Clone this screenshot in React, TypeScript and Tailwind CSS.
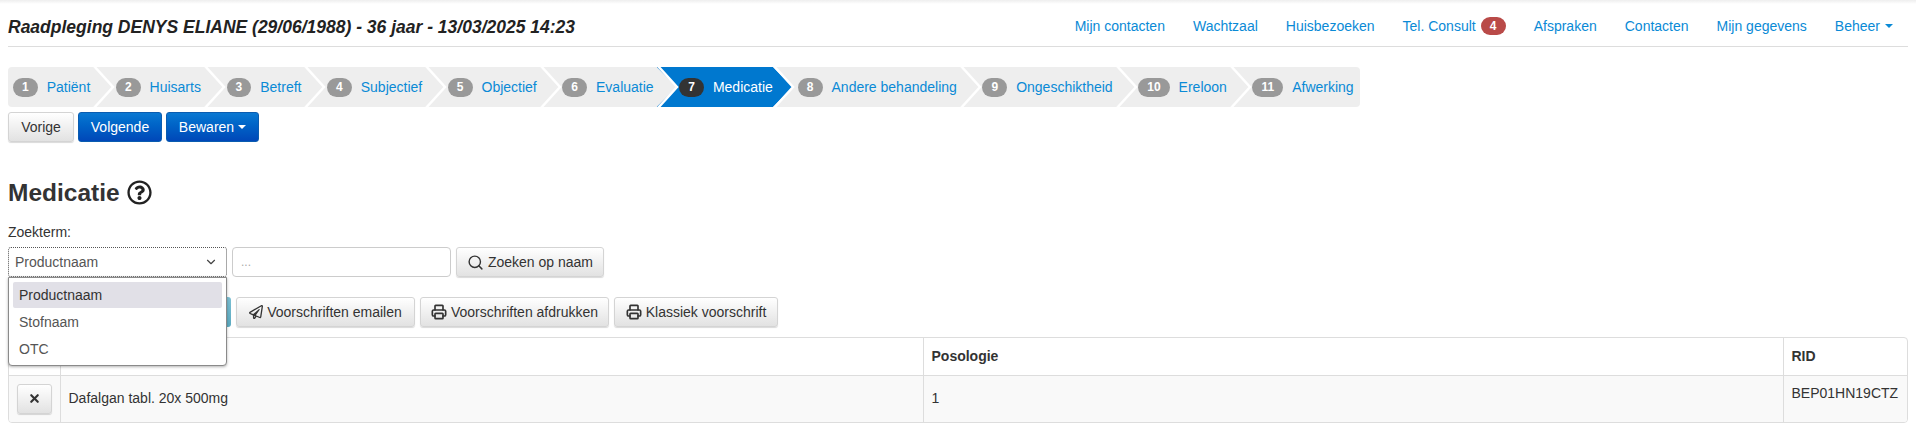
import { ChevronDown, Search, X } from 'lucide-react';
import { FaRegPaperPlane, FaRegQuestionCircle } from 'react-icons/fa';
import { LuPrinter } from 'react-icons/lu';

const NAV_LINKS = ['Mijn contacten', 'Wachtzaal', 'Huisbezoeken'];
const NAV_LINKS_2 = ['Afspraken', 'Contacten', 'Mijn gegevens'];

const STEPS = [
  'Patiënt',
  'Huisarts',
  'Betreft',
  'Subjectief',
  'Objectief',
  'Evaluatie',
  'Medicatie',
  'Andere behandeling',
  'Ongeschiktheid',
  'Ereloon',
  'Afwerking',
];

const PRINT_BUTTONS = [
  { label: 'Voorschriften afdrukken', width: 'w-[189px]' },
  { label: 'Klassiek voorschrift', width: 'w-[164px]' },
];

const btnDefault =
  'flex h-[30px] items-center justify-center rounded-[3px] border border-[#d4d4d4] bg-gradient-to-b from-white to-[#e2e2e2] text-[14px] text-[#333] shadow-[0_1px_1px_rgba(0,0,0,0.15)]';
const btnPrimary =
  'flex h-[30px] items-center justify-center rounded-[3px] border border-[#0a5cb0] bg-gradient-to-b from-[#0a78d2] to-[#0047b8] text-[14px] text-white';

function Step({ index, label }: { index: number; label: string }) {
  const active = index === 7;
  const last = index === STEPS.length;
  // the step after the active one sits a little further out
  const padLeft = index === 1 ? 'pl-[5px]' : index === 8 ? 'pl-[25px]' : 'pl-[22.6px]';

  return (
    <li className={`relative flex h-10 items-center ${padLeft} ${active ? 'pr-0' : 'pr-[3px]'}`}>
      {active && (
        <span className="absolute inset-y-0 left-0 -right-5 bg-[#0078cf] [clip-path:polygon(0_0,calc(100%-20px)_0,100%_50%,calc(100%-20px)_100%,0_100%,20px_50%)]" />
      )}
      <span
        className={`relative flex h-[19px] items-center justify-center rounded-full px-[9px] text-[12px] font-bold leading-none text-white ${
          active ? 'bg-[#333]' : 'bg-[#999]'
        }`}
      >
        {index}
      </span>
      <span className={`relative ml-[9px] whitespace-nowrap text-[14px] ${active ? 'text-white' : 'text-[#0a8ad6]'}`}>
        {label}
      </span>
      {!last && (
        <svg className="absolute left-full top-0 z-10 h-10 w-[22px]" viewBox="0 0 22 40" fill="none">
          <path d="M1 -1L20 20L1 41" stroke="white" strokeWidth="2.5" />
        </svg>
      )}
    </li>
  );
}

export default function App() {
  return (
    <div className="relative h-[430px] overflow-hidden bg-white px-2 font-['Liberation_Sans',Arial,sans-serif] text-[14px] text-[#333]">
      <div className="absolute inset-x-0 top-0 h-1 bg-gradient-to-b from-[#eee] to-white" />

      {/* Header */}
      <header className="flex h-[47px] items-start justify-between border-b border-[#ddd] pt-[15px]">
        <h1 className="text-[17.5px] font-bold italic leading-[24px] text-[#222]">
          Raadpleging DENYS ELIANE (29/06/1988) - 36 jaar - 13/03/2025 14:23
        </h1>
        <nav className="flex items-center gap-7 pr-[15px] text-[#0a8ad6]">
          {NAV_LINKS.map((link) => (
            <a key={link} className="leading-[22px]">
              {link}
            </a>
          ))}
          <a className="flex items-center gap-[5px] leading-[22px]">
            Tel. Consult
            <span className="flex h-[18px] w-[25px] items-center justify-center rounded-full bg-[#b94a48] text-[12px] font-bold text-white">
              4
            </span>
          </a>
          {NAV_LINKS_2.map((link) => (
            <a key={link} className="leading-[22px]">
              {link}
            </a>
          ))}
          <a className="flex items-center gap-[5px] leading-[22px]">
            Beheer
            <span className="h-0 w-0 border-x-4 border-t-4 border-x-transparent border-t-[#0a8ad6]" />
          </a>
        </nav>
      </header>

      {/* Steps */}
      <ol className="mt-5 flex h-10 w-[1352px] list-none rounded-[4px] bg-[#eee]">
        {STEPS.map((step, i) => (
          <Step key={step} index={i + 1} label={step} />
        ))}
      </ol>

      <div className="mt-[5px] flex gap-[4px]">
        <button className={`${btnDefault} w-[66px]`}>Vorige</button>
        <button className={`${btnPrimary} w-[84px]`}>Volgende</button>
        <button className={`${btnPrimary} w-[93px] gap-1`}>
          Bewaren
          <span className="h-0 w-0 border-x-4 border-t-4 border-x-transparent border-t-white" />
        </button>
      </div>

      <h2 className="mt-[34px] flex h-[33px] items-center gap-[7px] text-[24.5px] font-bold leading-[33px] text-[#333]">
        Medicatie
        <FaRegQuestionCircle className="h-[25px] w-[25px] text-[#222]" />
      </h2>

      <label className="mt-[14px] block text-[14px] leading-[18px]">Zoekterm:</label>

      {/* Search row */}
      <div className="relative mt-[6px] flex gap-[5px]">
        <div className="flex h-[30px] w-[219px] items-center justify-between rounded-[3px] border border-dotted border-[#555] pl-[6px] pr-[8px] text-[#555]">
          Productnaam
          <ChevronDown className="h-[14px] w-[14px] text-[#444]" strokeWidth={2} />
        </div>
        <div className="flex h-[30px] w-[219px] items-center rounded-[4px] border border-[#ccc] pl-2 text-[12px] text-[#aaa]">
          ...
        </div>
        <button className={`${btnDefault} w-[148px] gap-1`}>
          <Search className="h-[17px] w-[17px]" strokeWidth={2} />
          Zoeken op naam
        </button>

        {/* Open select list */}
        <ul className="absolute left-0 top-[30px] z-20 flex h-[89px] w-[219px] list-none flex-col gap-px rounded-b-[4px] border border-[#8a8a8a] bg-white px-[4px] pt-[4px] text-[#555] shadow-[0_1px_3px_rgba(0,0,0,0.3)]">
          <li className="flex h-[26px] items-center rounded-[2px] bg-[#e1e0e7] px-[6px] text-[#333]">Productnaam</li>
          <li className="flex h-[26px] items-center px-[6px]">Stofnaam</li>
          <li className="flex h-[26px] items-center px-[6px]">OTC</li>
        </ul>
      </div>

      {/* Actions */}
      <div className="mt-5 flex gap-[5px]">
        <button className="h-[30px] w-[223px] rounded-[3px] bg-gradient-to-b from-[#7cc0d4] to-[#5aa9bf]" />
        <button className={`${btnDefault} w-[179px] gap-1`}>
          <FaRegPaperPlane className="h-[14px] w-[14px]" />
          Voorschriften emailen
        </button>
        {PRINT_BUTTONS.map(({ label, width }) => (
          <button key={label} className={`${btnDefault} ${width} gap-1`}>
            <LuPrinter className="h-4 w-4" strokeWidth={2.5} />
            {label}
          </button>
        ))}
      </div>

      {/* Table */}
      <div className="mt-[10px] overflow-hidden rounded-[4px] border border-[#ddd]">
        <table className="w-full table-fixed border-collapse">
          <colgroup>
            <col className="w-[51px]" />
            <col className="w-[863px]" />
            <col className="w-[860px]" />
            <col />
          </colgroup>
          <thead>
            <tr className="h-[37px] border-b border-[#ddd] text-left font-bold">
              <th className="border-r border-[#ddd]" />
              <th className="border-r border-[#ddd]" />
              <th className="border-r border-[#ddd] px-2">Posologie</th>
              <th className="px-2">RID</th>
            </tr>
          </thead>
          <tbody>
            <tr className="h-[47px] bg-[#f9f9f9]">
              <td className="border-r border-[#ddd] pl-[8px]">
                <button className={`${btnDefault} w-[35px]`}>
                  <X className="h-[13px] w-[13px]" strokeWidth={4} />
                </button>
              </td>
              <td className="border-r border-[#ddd] px-2">Dafalgan tabl. 20x 500mg</td>
              <td className="border-r border-[#ddd] px-2">1</td>
              <td className="px-2 pb-[10px]">BEP01HN19CTZ</td>
            </tr>
          </tbody>
        </table>
      </div>
    </div>
  );
}
